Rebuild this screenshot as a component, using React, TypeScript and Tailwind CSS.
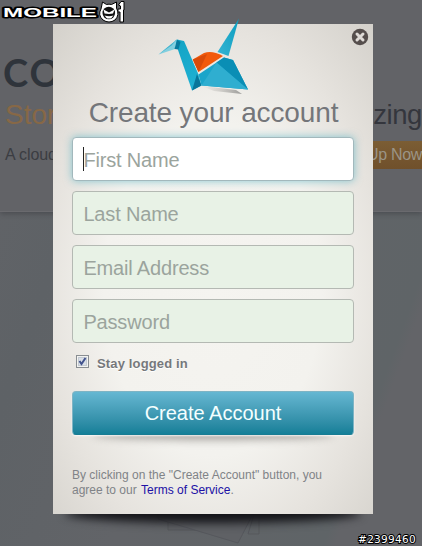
import React from "react";

const inputBase =
  "block h-[44px] w-[282px] rounded-[4px] border pl-[10.4px] pr-[10px] pt-[2px] text-[20px] leading-[40px] tracking-[-.17px] outline-none placeholder:text-[#9ba49d] placeholder:opacity-100";

function CraneLogo() {
  return (
    <svg className="absolute left-[105px] top-[-6px]" width="96" height="76" viewBox="158 18 96 76">
      <defs>
        <linearGradient id="neck" x1="0" y1="0" x2="0.4" y2="1">
          <stop offset="0" stopColor="#12a3c4" />
          <stop offset="1" stopColor="#1fb0d2" />
        </linearGradient>
        <linearGradient id="tail" x1="1" y1="0" x2="0" y2="1">
          <stop offset="0" stopColor="#0b9dbf" />
          <stop offset="1" stopColor="#35b4d3" />
        </linearGradient>
        <linearGradient id="shade" x1="0" y1="0" x2="1" y2="0">
          <stop offset="0" stopColor="#bdbab5" stopOpacity="0" />
          <stop offset="1" stopColor="#9b9b99" />
        </linearGradient>
      </defs>
      <path d="M201 86 L236 90 L242 94 L214 91Z" fill="url(#shade)" />
      <path d="M175 41 L177 39.500 L184 41 L198.500 74.500 L201.500 85.500 L192 90.500 L178 50Z" fill="url(#neck)" />
      <path d="M158.500 54.500 L177 39.500 L175 49Z" fill="#82cfdf" />
      <path d="M158.500 54.500 L177 39.500 L171.500 45.500Z" fill="#3fb2cd" />
      <path d="M174.500 49 L177 39.800 L180.500 42 L178.500 49.500Z" fill="#087a9e" />
      <path d="M192 90.500 L197 74 L201.500 85.500Z" fill="#08769b" />
      <path d="M192.800 59.500 L204 53 Q212 50 223 56 L198.500 72Z" fill="#f25a0b" />
      <path d="M192.800 59.500 L207 54 L198.500 72Z" fill="#d94b09" />
      <path d="M239 18.500 L228.500 56 L217.500 52Z" fill="url(#tail)" />
      <path d="M198.500 74.500 L224 57.500 L233 60 L248 89.500 L201.500 85.500Z" fill="#1ba5ca" />
      <path d="M216.500 62.500 L224 57.500 L233 60 L248 89.500Z" fill="#0a8eb5" />
      <path d="M216.500 62.500 L248 89.500 L201.500 85.500Z" fill="#2faed0" />
    </svg>
  );
}

function SiteWatermark() {
  return (
    <svg className="absolute left-0 top-0" width="128" height="26" viewBox="0 0 128 26">
      <text
        x="3"
        y="17"
        textLength="94"
        lengthAdjust="spacingAndGlyphs"
        fill="#fff"
        stroke="#000"
        strokeWidth="3"
        paintOrder="stroke"
        strokeLinejoin="round"
        className="font-['Liberation_Sans'] text-[13.5px] font-bold"
      >
        MOBILE
      </text>
      <path d="M101 9 L102.500 2 L106.500 4.500 Q109 3.800 111.500 4.500 L116.500 2 L116.500 8 Q120 15 115 20 Q109 24 103 20 Q97.500 15 101 9Z" fill="#fff" stroke="#000" />
      <circle cx="108.800" cy="13" r="6.300" fill="#111" />
      <path d="M103.500 9.500 L109 12.500 L114.500 9.500 L113 13.500 L109 14 L104.500 13.500Z" fill="#fff" />
      <path d="M104.500 15.500 Q109 17 113.500 15.500 L111 18.500 L107 18.500Z" fill="#fff" />
      <path d="M118.500 5 L121 1.500 H124 V10 H123.500 V22 H120 V12 H118 V9 H120.500 V6Z" fill="#fff" stroke="#000" />
    </svg>
  );
}

function Page() {
  return (
    <div className="h-[546px] bg-[linear-gradient(110deg,#636468_0%,#5e6266_24%,#626468_50%,#5f6467_84%,#636468_86%)]">
      <header className="h-[212px] border-b border-[#6a6a6e] bg-[#626367] pt-[48px] shadow-[0_2px_5px_rgba(45,45,50,.4)]">
        <div className="h-[50px] pl-[3px] font-['Lato'] text-[38px] font-bold leading-[49px] tracking-[2px] text-[#2f343b]">
          CO
        </div>
        <div className="flex h-[34px] justify-between text-[28px] leading-[34px]">
          <span className="pl-[5px] text-[#876846]">Stor</span>
          <span className="text-[27.5px] tracking-[-.4px] text-[#34363d]">zing</span>
        </div>
        <div className="mt-[9px] flex h-[28px] justify-between text-[16px] leading-[28px]">
          <span className="whitespace-nowrap pl-[5px] tracking-[-.1px] text-[#3b3d42]">A cloud</span>
          <div className="whitespace-nowrap bg-gradient-to-b from-[#7b5d34] to-[#70502b] pl-[8px] tracking-[-.3px] text-[#9b9486]">
            Up Now
          </div>
        </div>
      </header>
      <svg className="ml-[150px] mt-[296px] block" width="120" height="38" viewBox="0 0 120 38" fill="#606266" stroke="#56585d">
        <path d="M18 12 V22 H64" />
        <path d="M8 0 V11 L88 35 L106 0" fill="#5f6165" />
        <path d="M106 0 L98 26 H109 V0" fill="none" />
      </svg>
    </div>
  );
}

export default function App() {
  return (
    <div className="relative h-[546px] w-[422px] overflow-hidden font-['Liberation_Sans',Arial,sans-serif]">
      <Page />
      <div className="absolute left-[65px] top-[503px] h-[20px] w-[296px] rounded-[50%] bg-[#141418] blur-[5px]" />
      <main className="absolute left-[53px] top-[24px] h-[490px] w-[320px] bg-[radial-gradient(ellipse_62%_62%_at_50%_54%,#f5f4f0_0%,#f3f2ee_55%,#e6e3de_85%,#d3d0ca_120%)] px-[19px] pt-[72px]">
        <CraneLogo />
        <button aria-label="Close" className="absolute left-[298px] top-[4px] size-[18px]">
          <svg width="18" height="18" viewBox="0 0 18 18">
            <circle cx="9" cy="9" r="8.200" fill="#554e4c" />
            <path d="M6 6 L12 12 M12 6 L6 12" stroke="#dedad6" strokeWidth="3" strokeLinecap="round" />
          </svg>
        </button>
        <h1 className="flex h-[34px] justify-center whitespace-nowrap pl-px text-[28px] leading-[34px] tracking-[-.13px] text-[#74767a]">
          Create your account
        </h1>
        <form className="mt-[7px] flex flex-col" onSubmit={(e) => e.preventDefault()}>
          <div className="flex flex-col gap-[10px]">
            <div className="relative">
              <input placeholder="First Name" className={inputBase + " border-[#a2b8bc] bg-white shadow-[0_0_8px_rgba(65,170,190,.6)]"} />
              <span className="absolute left-[11px] top-[10px] h-[24px] w-px bg-[#222]" />
            </div>
            <input placeholder="Last Name" className={inputBase + " border-[#b4b9b3] bg-[#e8f2e6]"} />
            <input placeholder="Email Address" className={inputBase + " border-[#b4b9b3] bg-[#e8f2e6]"} />
            <input placeholder="Password" className={inputBase + " border-[#b4b9b3] bg-[#e8f2e6]"} />
          </div>
          <label className="mt-[12px] flex h-[16px] items-start pl-[4px]">
            <svg width="13" height="13" viewBox="0 0 13 13">
              <rect x=".5" y=".5" width="12" height="12" fill="#f3f3f1" stroke="#898e92" />
              <rect x="2.500" y="2.500" width="8" height="8" fill="#d9dfe7" stroke="#c3cad2" />
              <path d="M3.500 6 L5.500 9 L9.500 3" fill="none" stroke="#41528d" strokeWidth="2" />
            </svg>
            <span className="ml-[8px] text-[13px] font-bold leading-[17px] tracking-[.15px] text-[#76787b] [text-shadow:0_1px_0_#fff]">Stay logged in</span>
          </label>
          <div className="relative mt-[20px]">
            <span className="absolute left-[20px] top-[38px] h-[11px] w-[242px] rounded-[50%] bg-[#77736f] opacity-60 blur-[4px]" />
            <button className="relative h-[44px] w-[282px] rounded-[4px] border border-[#7eb4c4] border-b-[#187c93] bg-gradient-to-b from-[#65b7d2] to-[#137f98] text-[20px] leading-[42px] text-[#f4ffff] shadow-[0_1px_2px_rgba(255,255,255,.8)]">
              Create Account
            </button>
          </div>
        </form>
        <p className="mt-[33px] whitespace-nowrap text-[12px] leading-[15px] text-[#808387]">
          By clicking on the "Create Account" button, you
          <br />
          agree to our <a className="ml-px text-[#2010a5]">Terms of Service</a>.
        </p>
      </main>
      <SiteWatermark />
      <div className="absolute bottom-0 right-[6px] font-['DejaVu_Sans'] text-[10.5px] leading-[14px] tracking-[.3px] text-white [paint-order:stroke] [-webkit-text-stroke:2px_#000]">
        #2399460
      </div>
    </div>
  );
}
